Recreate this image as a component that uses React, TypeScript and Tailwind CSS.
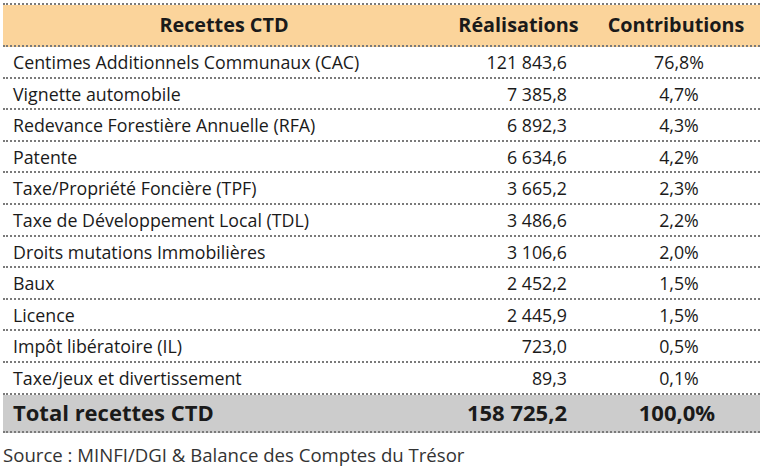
const ROWS: [string, string, string][] = [
  ["Centimes Additionnels Communaux (CAC)", "121 843,6", "76,8%"],
  ["Vignette automobile", "7 385,8", "4,7%"],
  ["Redevance Forestière Annuelle (RFA)", "6 892,3", "4,3%"],
  ["Patente", "6 634,6", "4,2%"],
  ["Taxe/Propriété Foncière (TPF)", "3 665,2", "2,3%"],
  ["Taxe de Développement Local (TDL)", "3 486,6", "2,2%"],
  ["Droits mutations Immobilières", "3 106,6", "2,0%"],
  ["Baux", "2 452,2", "1,5%"],
  ["Licence", "2 445,9", "1,5%"],
  ["Impôt libératoire (IL)", "723,0", "0,5%"],
  ["Taxe/jeux et divertissement", "89,3", "0,1%"],
];

const cols = "grid grid-cols-[442px_147px_1fr] items-center border-b-2 border-dotted border-[#7a7a7a]";

export default function App() {
  return (
    <div className="h-[475px] w-[760px] bg-white pl-[3px] pt-[3px] font-['Open_Sans',sans-serif] text-[#1a1a1a]">
      <div className="border-t-2 border-dotted border-[#7a7a7a]">
        {/* header */}
        <div className={`${cols} h-[42px] bg-[#fbd49b] text-[19.8px] font-bold`}>
          <div className="text-center">Recettes CTD</div>
          <div className="text-center">Réalisations</div>
          <div className="text-center">Contributions</div>
        </div>

        {ROWS.map(([label, value, pct]) => (
          <div key={label} className={`${cols} h-[31.6px] pt-px text-[17.8px]`}>
            <div className="pl-[10px]">{label}</div>
            <div className="pr-[25px] text-right">{value}</div>
            <div className="pl-[6px] text-center">{pct}</div>
          </div>
        ))}

        {/* total */}
        <div className={`${cols} h-[38px] bg-[#cccccc] text-[22px] font-bold`}>
          <div className="pl-[10px]">Total recettes CTD</div>
          <div className="pr-[25px] text-right">158 725,2</div>
          <div className="pl-[2px] text-center">100,0%</div>
        </div>
      </div>

      <p className="mt-[8px] text-[18.6px] text-[#333]">
        Source : MINFI/DGI &amp; Balance des Comptes du Trésor
      </p>
    </div>
  );
}
